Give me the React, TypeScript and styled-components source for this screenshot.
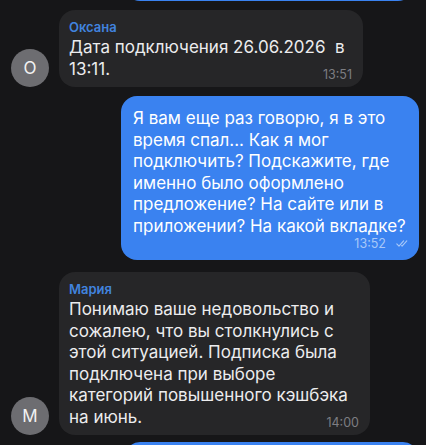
import React from "react";
import styled, { createGlobalStyle } from "styled-components";

type Msg = {
  id: number;
  out: boolean;
  author?: string;
  initial?: string;
  lines: string[];
  time: string;
  width: number;
  gap: number;
  timeInline?: boolean;
};

const messages: Msg[] = [
  {
    id: 1,
    out: false,
    author: "Оксана",
    initial: "О",
    lines: ["Дата подключения 26.06.2026  в", "13:11."],
    time: "13:51",
    width: 304,
    gap: 9,
    timeInline: true,
  },
  {
    id: 2,
    out: true,
    lines: [
      "Я вам еще раз говорю, я в это",
      "время спал... Как я мог",
      "подключить? Подскажите, где",
      "именно было оформлено",
      "предложение? На сайте или в",
      "приложении? На какой вкладке?",
    ],
    time: "13:52",
    width: 298,
    gap: 9,
  },
  {
    id: 3,
    out: false,
    author: "Мария",
    initial: "М",
    lines: [
      "Понимаю ваше недовольство и",
      "сожалею, что вы столкнулись с",
      "этой ситуацией. Подписка была",
      "подключена при выборе",
      "категорий повышенного кэшбэка",
      "на июнь.",
    ],
    time: "14:00",
    width: 311,
    gap: 12,
    timeInline: true,
  },
];

function DoubleCheck() {
  return (
    <svg width="12" height="7" viewBox="0 0 12 7" fill="none">
      <path d="M0.8 3.8 L3 6.2 L7.6 0.9" stroke="currentColor" strokeWidth="1.1" strokeLinecap="round" strokeLinejoin="round" />
      <path d="M5.6 5.7 L6.1 6.2 L10.8 0.9" stroke="currentColor" strokeWidth="1.1" strokeLinecap="round" strokeLinejoin="round" />
    </svg>
  );
}

function Message({ m }: { m: Msg }) {
  const body = m.lines.slice(0, m.timeInline ? -1 : undefined);
  const last = m.lines[m.lines.length - 1];
  return (
    <Row $out={m.out} $gap={m.gap}>
      {!m.out && <Avatar>{m.initial}</Avatar>}
      <Bubble $out={m.out} $width={m.width}>
        {m.author && <Author>{m.author}</Author>}
        {body.map((l, i) => (
          <Line key={i}>{l}</Line>
        ))}
        {m.timeInline ? (
          <LastLine>
            <Line>{last}</Line>
            <Time $out={m.out}>{m.time}</Time>
          </LastLine>
        ) : (
          <Meta>
            <Time $out={m.out}>{m.time}</Time>
            <DoubleCheck />
          </Meta>
        )}
      </Bubble>
    </Row>
  );
}

export default function App() {
  return (
    <>
      <GlobalStyle />
      <Chat>
        <PrevBubble />
        {messages.map((m) => (
          <Message key={m.id} m={m} />
        ))}
        <NextBubble />
      </Chat>
    </>
  );
}

const GlobalStyle = createGlobalStyle`
  html, body {
    margin: 0;
    padding: 0;
    background: #161618;
  }
  body {
    font-family: Inter, "Noto Sans", sans-serif;
    -webkit-font-smoothing: antialiased;
  }
`;

const Chat = styled.div`
  width: 426px;
  height: 445px;
  overflow: hidden;
  display: flex;
  flex-direction: column;
  background: #161618;
`;

const PrevBubble = styled.div`
  align-self: flex-end;
  width: 288px;
  height: 30px;
  margin-top: -29px;
  margin-right: 13px;
  border-radius: 16px;
  background: #3a82f0;
  flex-shrink: 0;
`;

const NextBubble = styled.div`
  align-self: flex-end;
  width: 293px;
  height: 30px;
  margin-top: 7px;
  margin-right: 8px;
  border-radius: 16px;
  background: #3a82f0;
  flex-shrink: 0;
`;

const Row = styled.div<{ $out: boolean; $gap: number }>`
  display: flex;
  align-items: flex-end;
  justify-content: ${(p) => (p.$out ? "flex-end" : "flex-start")};
  gap: 10px;
  margin-top: ${(p) => p.$gap}px;
  padding: ${(p) => (p.$out ? "0 7px 0 0" : "0 0 0 11px")};
  flex-shrink: 0;
`;

const Avatar = styled.div`
  width: 38px;
  height: 38px;
  border-radius: 50%;
  background: #6d6d71;
  color: #f2f2f2;
  display: flex;
  align-items: center;
  justify-content: center;
  font-size: 17px;
  flex-shrink: 0;
`;

const Bubble = styled.div<{ $out: boolean; $width: number }>`
  box-sizing: border-box;
  width: ${(p) => p.$width}px;
  border-radius: 16px;
  background: ${(p) => (p.$out ? "#3a82f0" : "#262628")};
  color: ${(p) => (p.$out ? "#ffffff" : "#ececee")};
  padding: ${(p) => (p.$out ? "12px 11px 9px 12px" : "9px 10px 7px 10px")};
`;

const Author = styled.div`
  color: #4183df;
  font-size: 13px;
  font-weight: 600;
  line-height: 17px;
  margin-bottom: 1px;
`;

const Line = styled.div`
  font-size: 17px;
  line-height: 21.5px;
  white-space: pre;
`;

const LastLine = styled.div`
  display: flex;
  align-items: flex-end;
  justify-content: space-between;
`;

const Meta = styled.div`
  display: flex;
  align-items: center;
  justify-content: flex-end;
  gap: 10px;
  color: #a8c8f8;
  margin-top: -1px;
`;

const Time = styled.span<{ $out: boolean }>`
  font-size: 12.5px;
  line-height: 15px;
  color: ${(p) => (p.$out ? "#a8c8f8" : "#7d7d82")};
  padding-right: ${(p) => (p.$out ? "0" : "1px")};
  margin-bottom: ${(p) => (p.$out ? "0" : "-2px")};
`;
